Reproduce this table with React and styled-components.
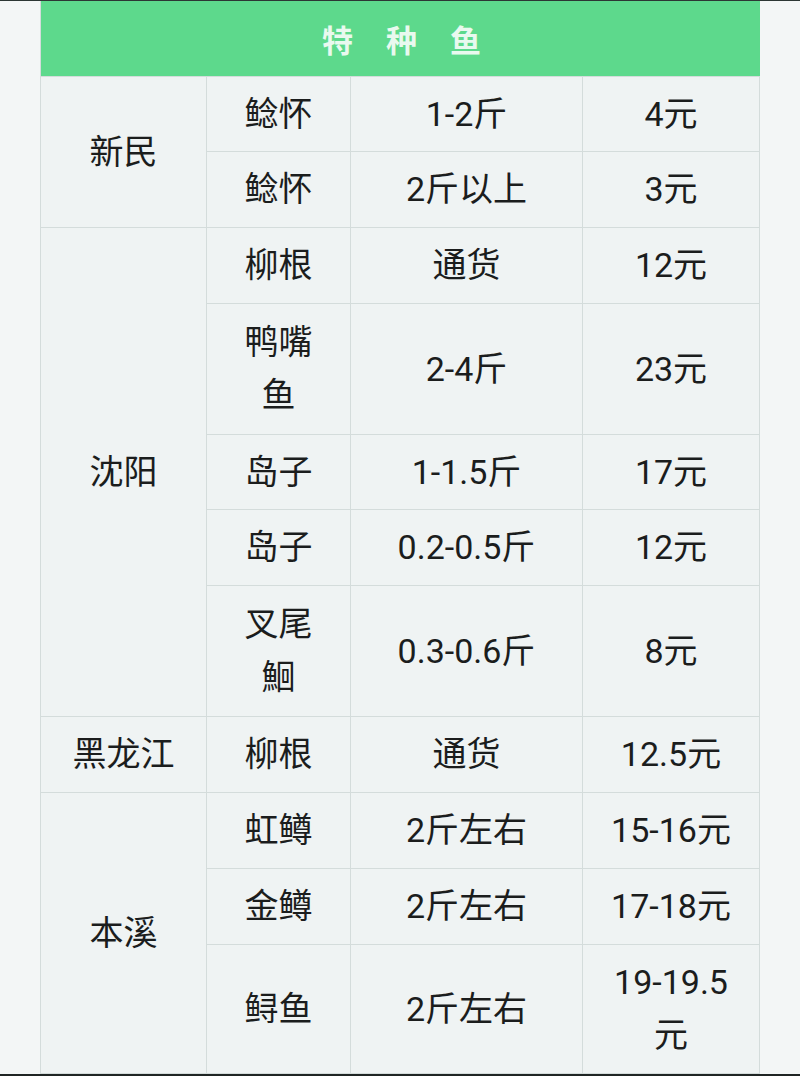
import React from 'react';
import styled, { createGlobalStyle } from 'styled-components';

const GlobalStyle = createGlobalStyle`
  html, body {
    margin: 0;
    padding: 0;
    background: #f2f5f5;
  }
  * { box-sizing: border-box; }
`;

const Page = styled.div`
  width: 800px;
  height: 1076px;
  overflow: hidden;
  background: #f3f6f6;
  border-top: 1px solid #2c3634;
  border-bottom: 2px solid #1f2524;
  padding-left: 40px;
  font-family: Roboto, "Noto Sans CJK SC", sans-serif;
  color: #1b1d1d;
`;

const Table = styled.div`
  display: grid;
  width: 719px;
  grid-template-columns: 166px 144px 232px 177px;
  grid-template-rows: 76px 75px 76px 76px 131px 75px 76px 131px 76px 76px 76px 129px;
  border-left: 1px solid #d4dcdb;
  background: #eff3f3;
`;

const Header = styled.div`
  grid-column: 1 / -1;
  background: #5dd98c;
  display: flex;
  align-items: center;
  justify-content: center;
  gap: 33px;
  padding-left: 2px;
  font-family: "Noto Sans CJK SC", sans-serif;
  font-size: 31px;
  font-weight: 700;
  color: #e9f9ef;
  border-bottom: 1px solid #d4dcdb;
`;

const Cell = styled.div`
  display: flex;
  align-items: center;
  justify-content: center;
  text-align: center;
  padding: 0 22px;
  font-size: 34px;
  line-height: 53px;
  border-right: 1px solid #d4dcdb;
  border-bottom: 1px solid #d4dcdb;
`;

const CityCell = styled(Cell)`
  grid-column: 1;
  grid-row: span ${p => p.$span};
  padding: 0 10px;
`;

const FishCell = styled(Cell)`
  grid-column: 2;
`;

const SizeCell = styled(Cell)`
  grid-column: 3;
  padding: 0 10px;
`;

const PriceCell = styled(Cell)`
  grid-column: 4;
  padding: 0 20px;
`;

const groups = [
  {
    city: '新民',
    rows: [
      ['鲶怀', '1-2斤', '4元'],
      ['鲶怀', '2斤以上', '3元'],
    ],
  },
  {
    city: '沈阳',
    rows: [
      ['柳根', '通货', '12元'],
      ['鸭嘴鱼', '2-4斤', '23元'],
      ['岛子', '1-1.5斤', '17元'],
      ['岛子', '0.2-0.5斤', '12元'],
      ['叉尾鮰', '0.3-0.6斤', '8元'],
    ],
  },
  {
    city: '黑龙江',
    rows: [['柳根', '通货', '12.5元']],
  },
  {
    city: '本溪',
    rows: [
      ['虹鳟', '2斤左右', '15-16元'],
      ['金鳟', '2斤左右', '17-18元'],
      ['鲟鱼', '2斤左右', '19-19.5元'],
    ],
  },
];

export default function App() {
  return (
    <>
      <GlobalStyle />
      <Page>
        <Table>
          <Header>
            <span>特</span>
            <span>种</span>
            <span>鱼</span>
          </Header>
          {groups.map(g => (
            <React.Fragment key={g.city}>
              <CityCell $span={g.rows.length}>{g.city}</CityCell>
              {g.rows.map(([fish, size, price], i) => (
                <React.Fragment key={i}>
                  <FishCell>{fish}</FishCell>
                  <SizeCell>{size}</SizeCell>
                  <PriceCell>{price}</PriceCell>
                </React.Fragment>
              ))}
            </React.Fragment>
          ))}
        </Table>
      </Page>
    </>
  );
}
